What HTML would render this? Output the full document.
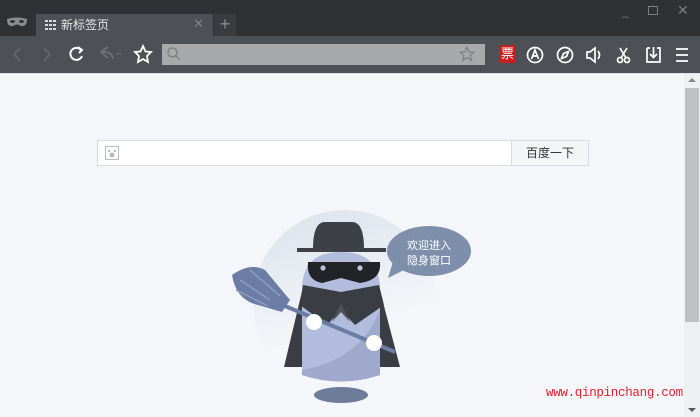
<!DOCTYPE html>
<html><head><meta charset="utf-8"><style>
*{margin:0;padding:0;box-sizing:border-box}
body{width:700px;height:417px;overflow:hidden;background:#f5f6f9;font-family:"Liberation Sans","Noto Sans CJK SC",sans-serif;position:relative}
.abs{position:absolute}
</style></head><body>
<div class="abs" style="left:0;top:0;width:700px;height:36px;background:#2f3135"></div>
<svg class="abs" style="left:6px;top:16px" width="22" height="12" viewBox="0 0 22 12"><path d="M1 3 Q11 0 21 3 Q21 11 15 10 Q11 7 7 10 Q1 11 1 3Z" fill="#8a8c90"/><ellipse cx="6.5" cy="5.5" rx="2.5" ry="1.5" fill="#2f3135"/><ellipse cx="15.5" cy="5.5" rx="2.5" ry="1.5" fill="#2f3135"/></svg>
<div class="abs" style="left:36px;top:14px;width:177px;height:22px;background:#4d5055"></div>
<svg class="abs" style="left:45px;top:20px" width="12" height="10"><g fill="#d8d9db"><rect x="0" y="0" width="3" height="2"/><rect x="4" y="0" width="3" height="2"/><rect x="8" y="0" width="3" height="2"/><rect x="0" y="4" width="3" height="2"/><rect x="4" y="4" width="3" height="2"/><rect x="8" y="4" width="3" height="2"/><rect x="0" y="8" width="3" height="2"/><rect x="4" y="8" width="3" height="2"/><rect x="8" y="8" width="3" height="2"/></g></svg>
<div class="abs" style="left:61px;top:18px;font-size:12px;color:#e6e7e8;line-height:14px">新标签页</div>
<div class="abs" style="left:193px;top:17px;font-size:13px;color:#80838a;line-height:14px">✕</div>
<div class="abs" style="left:214px;top:14px;width:22px;height:22px;background:#3a3c40;color:#8a8c90;font-size:18px;text-align:center;line-height:21px">+</div>
<div class="abs" style="left:622px;top:4px;color:#7c7e82;font-size:12px">_</div>
<div class="abs" style="left:648px;top:6px;width:10px;height:9px;border:1px solid #7c7e82"></div>
<div class="abs" style="left:677px;top:2px;color:#7c7e82;font-size:14px">✕</div>
<div class="abs" style="left:0;top:36px;width:700px;height:37px;background:#4d5055"></div>
<svg class="abs" style="left:0;top:36px" width="160" height="37" fill="none" stroke-width="2">
<path d="M20 12 L14 18.5 L20 25" stroke="#62656a"/>
<path d="M44 12 L50 18.5 L44 25" stroke="#62656a"/>
<path d="M81 14 A6 6 0 1 0 82 20" stroke="#fff"/><path d="M78 11 L82 14 L79 17" stroke="#fff"/>
<path d="M108 22 L101 16 L108 11 M101 16 Q112 15 113 23" stroke="#6c6f74"/><path d="M116 18 L122 18" stroke="#6c6f74" stroke-width="1"/>
<path d="M143 10 L145.5 15.5 L151 16 L147 20 L148 26 L143 23 L138 26 L139 20 L135 16 L140.5 15.5Z" stroke="#fff" stroke-width="1.8"/>
</svg>
<div class="abs" style="left:162px;top:44px;width:323px;height:21px;background:#a8a9ab"></div>
<svg class="abs" style="left:166px;top:46px" width="16" height="16" fill="none" stroke="#7f8083" stroke-width="1.5"><circle cx="6.5" cy="6.5" r="4.5"/><path d="M10 10 L14 14"/></svg>
<svg class="abs" style="left:459px;top:46px" width="16" height="16" fill="none" stroke="#7c7d80" stroke-width="1.2"><path d="M8 1 L10 6 L15 6.3 L11 9.5 L12.5 14.5 L8 11.7 L3.5 14.5 L5 9.5 L1 6.3 L6 6Z"/></svg>
<div class="abs" style="left:499px;top:45px;width:17px;height:18px;background:#c9201f;color:#fff;font-size:13px;line-height:18px;text-align:center">票</div>
<svg class="abs" style="left:520px;top:36px" width="180" height="37" fill="none" stroke="#fff" stroke-width="1.7">
<circle cx="15" cy="19" r="7.5"/><path d="M11.5 23 L15 14 L18.5 23 M12.7 20 L17.3 20"/>
<circle cx="45" cy="19" r="7.5"/><path d="M48.5 15.5 L46.5 20.5 L41.5 22.5 L43.5 17.5Z"/>
<path d="M67 16 L70 16 L75 12 L75 26 L70 22 L67 22Z"/><path d="M78 15 Q81 19 78 23"/>
<circle cx="100" cy="24" r="2.5"/><circle cx="107" cy="24" r="2.5"/><path d="M100 12 L106 22 M107 12 L101 22"/>
<path d="M127 12 L127 26 L140 26 L140 12 L137 12 M130 12 L127 12"/><path d="M133.5 11 L133.5 21 M130 18 L133.5 21.5 L137 18"/>
<path d="M156 13 L168 13 M156 19 L168 19 M156 25 L168 25"/>
</svg>
<div class="abs" style="left:0;top:73px;width:700px;height:1px;background:#dfe2ea"></div>
<div class="abs" style="left:684px;top:74px;width:16px;height:343px;background:#eef0f2"></div>
<div class="abs" style="left:685px;top:88px;width:14px;height:234px;background:#bfc0c1"></div>
<div class="abs" style="left:688px;top:78px;width:0;height:0;border-left:4px solid transparent;border-right:4px solid transparent;border-bottom:4px solid #888"></div>
<div class="abs" style="left:688px;top:408px;width:0;height:0;border-left:4px solid transparent;border-right:4px solid transparent;border-top:4px solid #555"></div>
<div class="abs" style="left:97px;top:140px;width:415px;height:26px;background:#fff;border:1px solid #d9dbe0"></div>
<svg class="abs" style="left:105px;top:146px" width="14" height="14"><rect x="0.5" y="0.5" width="13" height="13" fill="#fff" stroke="#b8bcc4"/><circle cx="7" cy="9" r="2.5" fill="#b8bcc4"/><circle cx="4" cy="5" r="1.2" fill="#b8bcc4"/><circle cx="10" cy="5" r="1.2" fill="#b8bcc4"/></svg>
<div class="abs" style="left:511px;top:140px;width:78px;height:26px;background:#f4f5f7;border:1px solid #d9dbe0;font-size:12px;color:#333;text-align:center;line-height:24px">百度一下</div>
<svg class="abs" style="left:200px;top:200px" width="300" height="217" viewBox="200 200 300 217">
<defs><linearGradient id="g" x1="0" y1="0" x2="0.3" y2="1"><stop offset="0" stop-color="#dbe1ec"/><stop offset="0.75" stop-color="#f5f6f9"/></linearGradient></defs>
<circle cx="345" cy="302" r="92" fill="url(#g)"/>
<ellipse cx="341" cy="395" rx="27" ry="8" fill="#6d7c98"/>
<path d="M302 290 Q302 252 341 252 Q380 252 380 290 L380 375 Q341 388 302 375Z" fill="#b2bcdc"/>
<path d="M380 310 Q360 360 302 370 L302 375 Q341 388 380 375Z" fill="#9ea9cc"/>
<path d="M303 287 L284 367 L302 367 L302 300Z M379 287 L400 367 L380 367 L380 300Z" fill="#3b3d44"/>
<path d="M303 285 L341 292 L379 285 L384 305 L355 325 L341 310 L327 325 L300 305Z" fill="#3b3d44"/>
<path d="M341 303 L332 322 L341 312 L350 322Z" fill="#505359"/>
<path d="M308 262 L380 262 Q382 280 360 283 L341 278 L322 283 Q306 280 308 262Z" fill="#222326"/>
<circle cx="323" cy="268" r="2.6" fill="#b8c1de"/><circle cx="360" cy="268" r="2.6" fill="#b8c1de"/>
<path d="M313 249 Q313 222 325 222 L352 222 Q364 222 364 249Z" fill="#3e4047"/>
<rect x="297" y="248" width="89" height="4" fill="#3e4047"/>
<path d="M232 275 Q250 262 265 270 L290 300 L282 312 L258 305 Q236 300 232 275Z" fill="#6b7da4"/>
<path d="M240 280 L270 300 M236 290 L268 306 M250 270 L280 296" stroke="#8e9dc0" stroke-width="1.5"/>
<path d="M285 306 L395 352" stroke="#6b7da4" stroke-width="4"/>
<circle cx="314" cy="322" r="8" fill="#fff"/>
<circle cx="374" cy="343" r="8" fill="#fff"/>
<path d="M395 255 L388 278 L408 268Z" fill="#7d8fab"/>
<ellipse cx="429" cy="251" rx="42" ry="25" fill="#7d8fab"/>
<text x="429" y="249" font-size="11" fill="#fff" text-anchor="middle" font-family="Liberation Sans,Noto Sans CJK SC,sans-serif">欢迎进入</text>
<text x="429" y="264" font-size="11" fill="#fff" text-anchor="middle" font-family="Liberation Sans,Noto Sans CJK SC,sans-serif">隐身窗口</text>
</svg>
<div class="abs" style="left:546px;top:386px;font-family:'Liberation Mono',monospace;font-size:12.5px;color:#e8202a;letter-spacing:-0.3px">www.qinpinchang.com</div>
</body></html>
